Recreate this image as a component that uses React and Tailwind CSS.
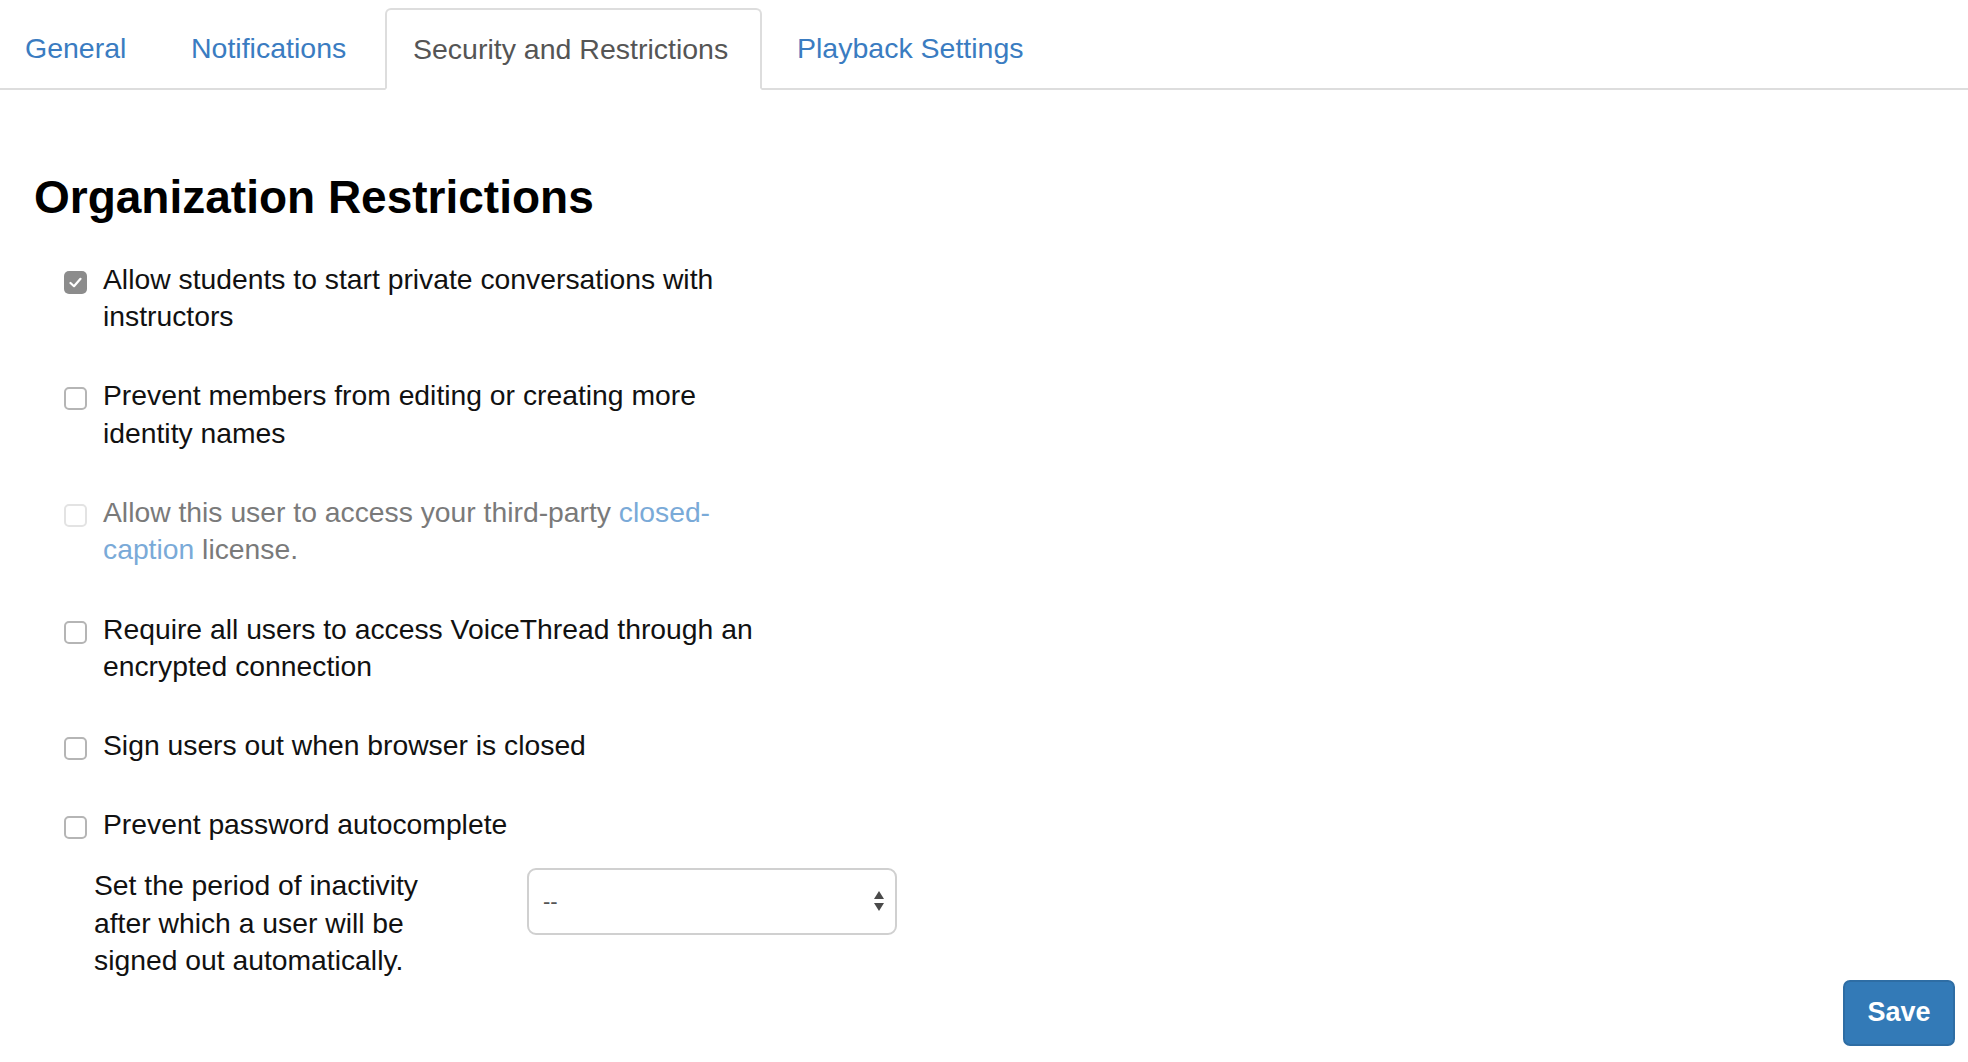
import React from "react";

function Checkbox({ checked, disabled }) {
  if (checked) {
    return (
      <span className="mt-[10px] flex h-[23px] w-[23px] shrink-0 items-center justify-center rounded-[5px] bg-[#8c8c8c]">
        <svg width="13" height="11" viewBox="0 0 13 11" fill="none">
          <path d="M1.5 6 L5 9.2 L11.5 1.8" stroke="white" strokeWidth="2.2" strokeLinecap="round" strokeLinejoin="round" />
        </svg>
      </span>
    );
  }
  return (
    <span
      className={
        disabled
          ? "mt-[10px] h-[23px] w-[23px] shrink-0 rounded-[5px] border-2 border-[#e3e3e3] bg-white"
          : "mt-[10px] h-[23px] w-[23px] shrink-0 rounded-[5px] border-2 border-[#b5b5b5] bg-white"
      }
    />
  );
}

function Item({ checked, disabled, children }) {
  return (
    <div className="flex items-start gap-[16px] pl-[64px]">
      <Checkbox checked={checked} disabled={disabled} />
      <div className={disabled ? "w-[665px] text-[#7a7a7a]" : "w-[665px] text-[#111]"}>{children}</div>
    </div>
  );
}

export default function App() {
  return (
    <div className="h-[1062px] w-full overflow-hidden bg-white font-['Liberation_Sans',Arial,sans-serif]">
      <nav className="flex h-[90px] items-end border-b-2 border-[#dddddd] text-[28.5px]">
        <a className="flex h-[80px] w-[159px] items-center pl-[25px] pt-[1px] text-[#3a7cc1]">General</a>
        <a className="flex h-[80px] w-[226px] items-center pl-[32px] pt-[1px] text-[#3a7cc1]">Notifications</a>
        <a className="mb-[-2px] flex h-[82px] w-[377px] items-center rounded-t-[6px] border-2 border-[#dddddd] border-b-white bg-white pl-[26px] pt-[1px] text-[#555555]">
          Security and Restrictions
        </a>
        <a className="flex h-[80px] items-center pl-[35px] pt-[1px] text-[#3a7cc1]">Playback Settings</a>
      </nav>

      <h2 className="ml-[34px] mt-[83px] text-[46px] font-bold leading-[49.5px] text-black">
        Organization Restrictions
      </h2>

      <div className="mt-[38px] flex flex-col gap-[41.5px] text-[28.3px] leading-[37.6px]">
        <Item checked>Allow students to start private conversations with instructors</Item>
        <Item>Prevent members from editing or creating more identity names</Item>
        <Item disabled>
          Allow this user to access your third-party <span className="text-[#7aaad8]">closed-caption</span> license.
        </Item>
        <Item>Require all users to access VoiceThread through an encrypted connection</Item>
        <Item>Sign users out when browser is closed</Item>
        <Item>Prevent password autocomplete</Item>
      </div>

      <div className="mt-[23px] flex items-start pl-[94px] text-[28.3px] leading-[37.6px] text-[#111]">
        <div className="w-[350px]">Set the period of inactivity after which a user will be signed out automatically.</div>
        <div className="ml-[83px] mt-[1px] flex h-[67px] w-[370px] items-center justify-between rounded-[9px] border-2 border-[#d0d0d0] bg-white pl-[14px] pr-[10px]">
          <span className="text-[22px] text-[#555]">--</span>
          <svg width="12" height="24" viewBox="0 0 12 24">
            <path d="M6 2 L11 10 L1 10 Z" fill="#4a4a4a" />
            <path d="M1 14 L11 14 L6 22 Z" fill="#4a4a4a" />
          </svg>
        </div>
      </div>

      <div className="flex justify-end pr-[13px]">
        <button className="mt-[0px] flex h-[66px] w-[112px] items-center justify-center rounded-[7px] border-2 border-[#2e6da4] bg-[#337ab7] text-[27px] font-bold text-white">
          Save
        </button>
      </div>
    </div>
  );
}
